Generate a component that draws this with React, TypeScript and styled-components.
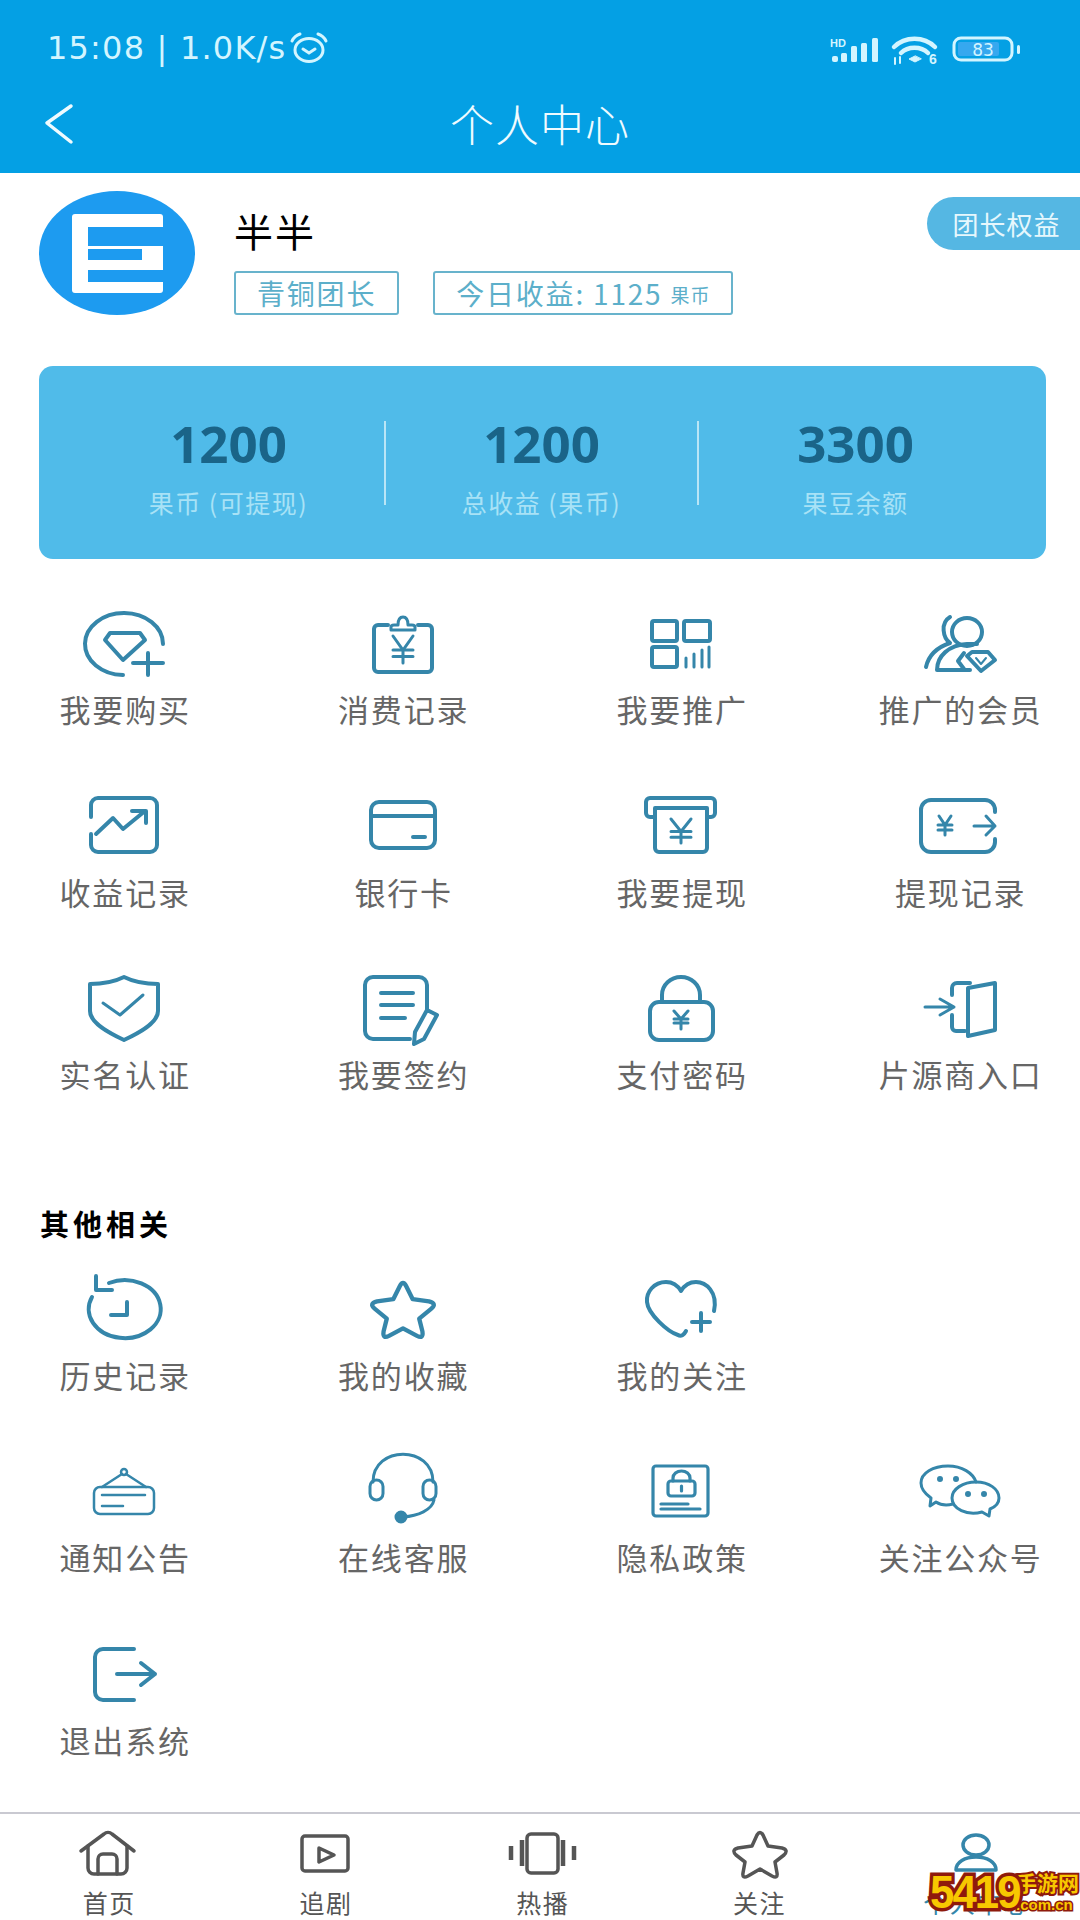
import React from 'react'
import styled, { createGlobalStyle } from 'styled-components'

const CJK = `"Noto Sans CJK SC", "Noto Sans", sans-serif`

const GlobalStyle = createGlobalStyle`
  html, body {
    margin: 0;
    padding: 0;
    background: #fff;
  }
  body {
    font-family: ${CJK};
  }
`

const Page = styled.div`
  position: relative;
  width: 1080px;
  height: 1920px;
  overflow: hidden;
  display: flex;
  flex-direction: column;
  background: #fff;
`

const Header = styled.header`
  height: 173px;
  flex: none;
  background: #04a0e4;
  color: #d3f5ff;
`

const StatusBar = styled.div`
  height: 96px;
  padding: 33px 58px 0 47px;
  box-sizing: border-box;
  display: flex;
  align-items: flex-start;
  justify-content: space-between;
`

const StatusLeft = styled.div`
  display: flex;
  align-items: center;
  gap: 3px;
  height: 30px;
`

const StatusText = styled.span`
  font-family: "DejaVu Sans", sans-serif;
  font-size: 32px;
  line-height: 30px;
  letter-spacing: 1.2px;
  white-space: nowrap;
`

const StatusRight = styled.div`
  display: flex;
  align-items: center;
  gap: 11px;
  height: 30px;
  margin-top: 3px;
`

const StatusIcon = styled.svg`
  overflow: visible;
  flex: none;
`

const NavBar = styled.nav`
  display: grid;
  grid-template-columns: 1fr auto 1fr;
  align-items: center;
  height: 56px;
  padding: 0 44px;
`

const Title = styled.h1`
  margin: -3px 0 0;
  font-size: 44px;
  line-height: 56px;
  font-weight: 300;
  letter-spacing: 1px;
  color: #effbff;
`

const Profile = styled.section`
  display: flex;
  align-items: flex-start;
  padding: 18px 0 0 39px;
  height: 177px;
  box-sizing: border-box;
`

const Avatar = styled.svg`
  width: 156px;
  height: 124px;
  flex: none;
`

const ProfileInfo = styled.div`
  margin-left: 39px;
  display: flex;
  flex-direction: column;
`

const Name = styled.div`
  font-size: 39px;
  line-height: 40px;
  margin-top: 19px;
  letter-spacing: 2px;
  color: #000;
`

const Tags = styled.div`
  display: flex;
  align-items: flex-start;
  gap: 34px;
  margin-top: 21px;
`

const Tag = styled.div`
  box-sizing: border-box;
  height: 44px;
  padding: 0 21px;
  border: 2px solid #68b3cc;
  border-radius: 3px;
  display: flex;
  align-items: center;
  color: #5cafca;
  font-size: 28px;
  letter-spacing: 1.8px;
  white-space: nowrap;
`

const TagUnit = styled.span`
  font-size: 19px;
  letter-spacing: 1px;
  margin-left: 8px;
  margin-top: 3px;
`

const PerkButton = styled.button`
  margin: 6px 0 0 auto;
  width: 153px;
  height: 53px;
  border: 0;
  padding: 0 0 0 6px;
  border-radius: 27px 0 0 27px;
  background: #55b7e3;
  color: #e6f7fd;
  font-family: ${CJK};
  font-size: 26px;
  letter-spacing: 1px;
`

const StatCard = styled.section`
  margin: 16px 34px 0 39px;
  height: 193px;
  box-sizing: border-box;
  flex: none;
  border-radius: 14px;
  background: #50bbe9;
  display: grid;
  grid-template-columns: repeat(3, 1fr);
  padding: 55px 34px 0;
`

const Stat = styled.div<{ $divided?: boolean }>`
  height: 84px;
  display: flex;
  flex-direction: column;
  align-items: center;
  border-right: ${({ $divided }) => ($divided ? '2px solid #b9e5f6' : '0')};
`

const StatValue = styled.div`
  font-family: "Open Sans", sans-serif;
  font-weight: 700;
  font-size: 51px;
  line-height: 50px;
  margin-top: -3px;
  color: #1a6488;
`

const StatLabel = styled.div`
  font-size: 25px;
  line-height: 30px;
  margin-top: 19px;
  letter-spacing: 1.5px;
  color: #a8e2f6;
  white-space: nowrap;
`

const Grid = styled.div<{ $top: number }>`
  display: grid;
  grid-template-columns: repeat(4, 278.5px);
  grid-auto-rows: 182.5px;
  margin: ${({ $top }) => $top}px 0 0 -15px;
`

const Cell = styled.div`
  display: flex;
  flex-direction: column;
  align-items: center;
`

const CellIcon = styled.svg`
  width: 90px;
  height: 90px;
  flex: none;
  fill: none;
  stroke: #3586aa;
  stroke-width: 4;
  stroke-linecap: round;
  stroke-linejoin: round;
`

const CellLabel = styled.div`
  margin-top: 5px;
  font-size: 31px;
  line-height: 36px;
  letter-spacing: 1.8px;
  margin-right: -1.8px;
  color: #666;
  white-space: nowrap;
`

const SectionTitle = styled.h2`
  margin: 61px 0 0 40px;
  font-size: 29px;
  line-height: 36px;
  font-weight: 700;
  letter-spacing: 4px;
  color: #000;
`

const TabBar = styled.footer`
  margin-top: auto;
  height: 108px;
  box-sizing: border-box;
  flex: none;
  border-top: 2px solid #c9c9d1;
  display: grid;
  grid-template-columns: repeat(5, 216.8px);
  padding-top: 9px;
`

const Tab = styled.div<{ $active?: boolean }>`
  display: flex;
  flex-direction: column;
  align-items: center;
  color: ${({ $active }) => ($active ? '#3586aa' : '#555')};
`

const TabIcon = styled.svg`
  width: 70px;
  height: 60px;
  fill: none;
  stroke: currentColor;
  stroke-width: 3.5;
  stroke-linecap: round;
  stroke-linejoin: round;
`

const TabLabel = styled.div`
  margin-top: 4px;
  font-size: 25px;
  line-height: 30px;
  letter-spacing: 1.5px;
  margin-right: -1.5px;
  white-space: nowrap;
`

const Watermark = styled.div`
  position: absolute;
  right: 0;
  bottom: 2px;
  width: 150px;
  height: 52px;
  display: flex;
  align-items: center;
  color: #f8c800;
  font-family: "Liberation Sans", sans-serif;
  font-weight: 700;
`

const WatermarkBig = styled.div`
  width: 86px;
  flex: none;
  font-size: 46px;
  line-height: 52px;
  letter-spacing: -2px;
  transform: scaleX(0.95);
  transform-origin: left center;
  paint-order: stroke fill;
  -webkit-text-stroke: 7px #8f1a0c;
`

const WatermarkSide = styled.div`
  display: flex;
  flex-direction: column;
  align-items: flex-start;
`

const WatermarkCn = styled.div`
  font-family: ${CJK};
  font-size: 21px;
  line-height: 26px;
  font-weight: 700;
  paint-order: stroke fill;
  -webkit-text-stroke: 4px #8f1a0c;
`

const WatermarkDomain = styled.div`
  font-size: 15px;
  line-height: 20px;
  white-space: nowrap;
  paint-order: stroke fill;
  -webkit-text-stroke: 3px #8f1a0c;
`

const yen = (y: number, h = 27) => {
  const mid = y + h * 0.52
  return (
    <g strokeWidth="3">
      <path d={`M35 ${y} L45 ${mid} L55 ${y}`} />
      <path d={`M35 ${mid} H55 M35 ${mid + h * 0.24} H55 M45 ${mid} V${y + h}`} />
    </g>
  )
}

const ICONS: Record<string, React.ReactNode> = {
  buy: (
    <>
      <path d="M84 46 A39 31 0 1 0 44 77" />
      <path d="M26 42 L31 35 H61 L66 42 L44 62 Z" />
      <path d="M54 65 H84 M69 55 V77" />
    </>
  ),
  spend: (
    <>
      <path d="M30 27 H20 a4 4 0 0 0 -4 4 V70 a4 4 0 0 0 4 4 H70 a4 4 0 0 0 4 -4 V31 a4 4 0 0 0 -4 -4 H60" />
      <path d="M33 32 V29 Q33 27 36 27 H40 Q40 19 45 19 Q50 19 50 27 H54 Q57 27 57 29 V32 Z" strokeWidth="3" />
      {yen(38)}
    </>
  ),
  promote: (
    <>
      <rect x="16" y="23" width="25" height="20" rx="2" />
      <rect x="48" y="23" width="26" height="20" rx="2" />
      <rect x="16" y="49" width="25" height="20" rx="2" />
      <path d="M50 60 V69 M58 56 V69 M66 52 V69 M73 49 V69" strokeWidth="3" />
    </>
  ),
  members: (
    <>
      <ellipse cx="52" cy="34" rx="15" ry="14" />
      <path d="M35 19 C25 25 28 40 35 45 C20 50 13 60 11 69" />
      <path d="M22 72 C22 58 34 47 52 46 H62 M22 72 H55" />
      <path d="M49 55 L43 63 L49 71" />
      <path d="M52 58 L57 54 H73 L80 62 L66 73 Z" />
      <path d="M61 60 L66 66 L71 60" strokeWidth="2" />
    </>
  ),
  income: (
    <>
      <path d="M12 36 V24 a7 7 0 0 1 7 -7 H71 a7 7 0 0 1 7 7 V64 a7 7 0 0 1 -7 7 H19 a7 7 0 0 1 -7 -7 V53" />
      <path d="M17 53 L34 37 L44 48 L66 30 M53 30 H67 V42" />
    </>
  ),
  card: (
    <>
      <rect x="13" y="21" width="64" height="46" rx="8" />
      <path d="M13 35 H77 M55 56 H67" />
    </>
  ),
  withdraw: (
    <>
      <path d="M19 36 H14 a4 4 0 0 1 -4 -4 V21 a4 4 0 0 1 4 -4 H75 a4 4 0 0 1 4 4 V32 a4 4 0 0 1 -4 4 H71" />
      <path d="M19 27 H71 M19 27 V67 a4 4 0 0 0 4 4 H67 a4 4 0 0 0 4 -4 V27" />
      {yen(38, 24)}
    </>
  ),
  withdrawLog: (
    <>
      <path d="M80 31 V29 a10 10 0 0 0 -10 -10 H16 a10 10 0 0 0 -10 10 V61 a10 10 0 0 0 10 10 H70 a10 10 0 0 0 10 -10 V58" />
      <path d="M24 35 L30 44 L36 35 M23 44 H37 M23 49 H37 M30 44 V54" strokeWidth="3" />
      <path d="M59 45 H80 M71 35 L80 45 L71 54" strokeWidth="3" />
    </>
  ),
  shield: (
    <>
      <path d="M45 14 C55 19 68 21 79 21 V48 C79 60 60 70 45 77 C30 70 11 60 11 48 V21 C22 21 35 19 45 14 Z" />
      <path d="M24 40 L41 52 L64 32" strokeWidth="3" />
    </>
  ),
  sign: (
    <>
      <path d="M69 46 V22 a8 8 0 0 0 -8 -8 H15 a8 8 0 0 0 -8 8 V68 a8 8 0 0 0 8 8 H52" />
      <path d="M23 30 H55 M23 42 H55 M23 55 H47" />
      <path d="M69 47 L79 52 L66 76 L56 81 L57 69 Z" />
    </>
  ),
  lock: (
    <>
      <rect x="14" y="39" width="63" height="38" rx="9" />
      <path d="M26 39 V32 a19 18 0 0 1 38 0 V39" />
      <path d="M38 48 L45 56 L52 48 M38 56 H52 M38 60 H52 M45 56 V66" strokeWidth="3" />
    </>
  ),
  door: (
    <>
      <path d="M53 25 L80 20 V67 L53 73 Z" />
      <path d="M55 20 H42 a5 5 0 0 0 -5 5 V32 M37 52 V64 a4 4 0 0 0 4 4 H50" />
      <path d="M10 44 H39 M25 36 L39 44 L25 52" strokeWidth="3" />
    </>
  ),
  history: (
    <>
      <path d="M30 19 A36 29 0 1 1 13 33" />
      <path d="M17 12 V26 H33" />
      <path d="M48 38 V51 H32" />
    </>
  ),
  star: (
    <path
      transform="translate(45 46) scale(1.08) translate(-45 -45)"
      d="M42 23 Q45 17 48 23 L54 35 L69 37 Q77 39 71 44 L60 53 L63 65 Q64 72 58 69 L45 62 L32 69 Q26 72 27 65 L30 53 L19 44 Q13 39 21 37 L36 35 Z"
    />
  ),
  heart: (
    <>
      <path d="M78 47 C82 28 70 18 60 18 C53 18 48 22 45 27 C42 22 37 18 30 18 C18 18 10 28 11 38 C12 50 32 68 42 71 C45 73 48 71 50 67" />
      <path d="M56 58 H74 M65 49 V67" />
    </>
  ),
  notice: (
    <g strokeWidth="2.5">
      <rect x="15" y="41" width="60" height="27" rx="6" />
      <path d="M23 41 L43 28 M67 41 L47 28" />
      <circle cx="45" cy="26" r="3" />
      <path d="M23 49 H66 M23 60 H44" />
    </g>
  ),
  service: (
    <g strokeWidth="3">
      <path d="M15 36 C15 -1 75 -1 75 36" />
      <rect x="12" y="34" width="13" height="20" rx="6.5" />
      <rect x="65" y="34" width="13" height="20" rx="6.5" />
      <path d="M76 54 C74 64 60 70 45 71" />
      <circle cx="43" cy="71" r="5" fill="#3586aa" />
    </g>
  ),
  privacy: (
    <g strokeWidth="3.2">
      <rect x="17" y="20" width="55" height="50" rx="3" />
      <rect x="32" y="35" width="27" height="15" rx="3" />
      <path d="M37 35 V32 a8.5 7 0 0 1 17 0 V35 M45.5 40 V45" />
      <path d="M25 58 H52 M25 63 H64" />
    </g>
  ),
  wechat: (
    <g strokeWidth="3">
      <path d="M38 58 C30 60 24 58 21 56 L15 60 L16 52 C9 47 6 41 6 37 C6 27 18 20 33 20 C47 20 58 27 61 36" />
      <path d="M61 36 C74 36 84 43 84 52 C84 57 80 61 75 63 L74 70 L67 66 C52 70 37 63 37 52 C37 43 48 36 61 36 Z" />
      <circle cx="25" cy="33" r="1.5" />
      <circle cx="41" cy="33" r="1.5" />
      <circle cx="53" cy="48" r="1.5" />
      <circle cx="69" cy="48" r="1.5" />
    </g>
  ),
  exit: (
    <>
      <path d="M55 20 H24 a8 8 0 0 0 -8 8 V63 a8 8 0 0 0 8 8 H55" />
      <path d="M38 45 H76 M62 34 L76 45 L62 56" />
    </>
  ),
}

const TAB_ICONS: Record<string, React.ReactNode> = {
  home: (
    <>
      <path d="M8 28 L31 11 a6 6 0 0 1 8 0 L61 28" />
      <path d="M15 23 V45 a6 6 0 0 0 6 6 H48 a6 6 0 0 0 6 -6 V23" />
      <path d="M25 51 V36 a5 5 0 0 1 5 -5 H39 a5 5 0 0 1 5 5 V51" />
    </>
  ),
  play: (
    <>
      <rect x="12" y="13" width="46" height="35" rx="3" />
      <path d="M29 25 L44 32 L29 39 Z" />
    </>
  ),
  hot: (
    <>
      <rect x="20" y="11" width="31" height="39" rx="4" />
      <path d="M4 23 V37 M15 17 V43 M56 17 V43 M67 23 V37" strokeWidth="4.5" strokeLinecap="butt" />
    </>
  ),
  star: (
    <path d="M33 12 Q36 7 39 12 L44 23 L58 25 Q65 27 60 32 L51 39 L53 50 Q54 56 48 53 L36 46 L24 53 Q18 56 19 50 L21 39 L12 32 Q7 27 14 25 L28 23 Z" />
  ),
  user: (
    <>
      <ellipse cx="35" cy="22" rx="13" ry="10" />
      <path d="M15 47 C15 39 24 34 35 34 C46 34 55 39 55 47" />
      <path d="M16 47 H54" />
    </>
  ),
}

const MENU: (null | [string, string])[] = [
  ['buy', '我要购买'],
  ['spend', '消费记录'],
  ['promote', '我要推广'],
  ['members', '推广的会员'],
  ['income', '收益记录'],
  ['card', '银行卡'],
  ['withdraw', '我要提现'],
  ['withdrawLog', '提现记录'],
  ['shield', '实名认证'],
  ['sign', '我要签约'],
  ['lock', '支付密码'],
  ['door', '片源商入口'],
]

const OTHER: (null | [string, string])[] = [
  ['history', '历史记录'],
  ['star', '我的收藏'],
  ['heart', '我的关注'],
  null,
  ['notice', '通知公告'],
  ['service', '在线客服'],
  ['privacy', '隐私政策'],
  ['wechat', '关注公众号'],
  ['exit', '退出系统'],
]

const TABS: [string, string][] = [
  ['home', '首页'],
  ['play', '追剧'],
  ['hot', '热播'],
  ['star', '关注'],
  ['user', '个人中心'],
]

// dy nudges the drawing down inside its box, the labels stay on the row rhythm
const renderGrid = (items: (null | [string, string])[], dy: number) =>
  items.map((item, i) =>
    item ? (
      <Cell key={item[1]}>
        <CellIcon viewBox={`0 ${-dy} 90 90`}>{ICONS[item[0]]}</CellIcon>
        <CellLabel>{item[1]}</CellLabel>
      </Cell>
    ) : (
      <span key={i} />
    ),
  )

const App: React.FC = () => (
  <Page>
    <GlobalStyle />
    <Header>
      <StatusBar>
        <StatusLeft>
          <StatusText>15:08 | 1.0K/s</StatusText>
          <StatusIcon width="40" height="32" viewBox="0 0 40 32" fill="none" stroke="#d3f5ff" strokeWidth="3" strokeLinecap="round">
            <ellipse cx="20" cy="18" rx="14" ry="11.5" />
            <path d="M14 17 L20 21 L26 17" />
            <path d="M3 9 C5 5 8 3 11 2 M37 9 C35 5 32 3 29 2" />
          </StatusIcon>
        </StatusLeft>
        <StatusRight>
          <StatusIcon width="50" height="30" viewBox="0 0 50 30" fill="#d3f5ff">
            <text x="0" y="11" fontFamily="Liberation Sans, sans-serif" fontWeight="700" fontSize="11">HD</text>
            <rect x="2" y="20" width="6" height="6" rx="2" />
            <rect x="11" y="17" width="6" height="9" rx="1.5" />
            <rect x="21" y="10" width="6" height="16" rx="1.5" />
            <rect x="31" y="7" width="6" height="19" rx="1.5" />
            <rect x="42" y="2" width="6" height="24" rx="1.5" />
          </StatusIcon>
          <StatusIcon width="50" height="30" viewBox="0 0 50 30" fill="none" stroke="#d3f5ff" strokeWidth="4.5" strokeLinecap="round">
            <path d="M3 11 C14 0 33 0 44 11" />
            <path d="M10 17 C17 10 30 10 37 17" />
            <path d="M24 20 L18 23 L24 26 L30 23 Z" fill="#d3f5ff" strokeWidth="1" />
            <path d="M4 22 V28 M9 21 V27" strokeWidth="2" />
            <text x="38" y="28" fill="#d3f5ff" stroke="none" fontFamily="Liberation Sans, sans-serif" fontWeight="700" fontSize="14">6</text>
          </StatusIcon>
          <StatusIcon width="70" height="30" viewBox="0 0 70 30" fill="none">
            <rect x="2" y="2" width="58" height="22" rx="7" stroke="#d3f5ff" strokeWidth="3" />
            <rect x="6" y="6" width="41" height="14" rx="2" fill="#36a8ef" />
            <text x="31" y="20" textAnchor="middle" fill="#d3f5ff" fontFamily="DejaVu Sans, sans-serif" fontSize="17">83</text>
            <rect x="65" y="9" width="3" height="9" rx="1.5" fill="#d3f5ff" />
          </StatusIcon>
        </StatusRight>
      </StatusBar>
      <NavBar>
        <svg width="30" height="42" viewBox="0 0 30 42" fill="none" stroke="#effbff" strokeWidth="3.5" strokeLinecap="round" strokeLinejoin="round">
          <path d="M27 3 L3 20 L27 39" />
        </svg>
        <Title>个人中心</Title>
        <span />
      </NavBar>
    </Header>

    <Profile>
      <Avatar viewBox="0 0 156 124">
        <ellipse cx="78" cy="62" rx="78" ry="62" fill="#1d9bf0" />
        <rect x="33" y="23" width="91" height="79" rx="3" fill="#fff" />
        <path d="M49 36 H124 V55 H49 Z M49 58 H103 V69 H49 Z M49 79 H124 V91 H49 Z" fill="#1d9bf0" />
      </Avatar>
      <ProfileInfo>
        <Name>半半</Name>
        <Tags>
          <Tag>青铜团长</Tag>
          <Tag>
            今日收益: 1125<TagUnit>果币</TagUnit>
          </Tag>
        </Tags>
      </ProfileInfo>
      <PerkButton>团长权益</PerkButton>
    </Profile>

    <StatCard>
      <Stat $divided>
        <StatValue>1200</StatValue>
        <StatLabel>果币 (可提现)</StatLabel>
      </Stat>
      <Stat $divided>
        <StatValue>1200</StatValue>
        <StatLabel>总收益 (果币)</StatLabel>
      </Stat>
      <Stat>
        <StatValue>3300</StatValue>
        <StatLabel>果豆余额</StatLabel>
      </Stat>
    </StatCard>

    <Grid $top={37}>{renderGrid(MENU, 2)}</Grid>
    <SectionTitle>其他相关</SectionTitle>
    <Grid $top={21}>{renderGrid(OTHER, 2)}</Grid>

    <TabBar>
      {TABS.map(([icon, label]) => (
        <Tab key={icon} $active={icon === 'user'}>
          <TabIcon viewBox="0 0 70 60">{TAB_ICONS[icon]}</TabIcon>
          <TabLabel>{label}</TabLabel>
        </Tab>
      ))}
    </TabBar>

    <Watermark>
      <WatermarkBig>5419</WatermarkBig>
      <WatermarkSide>
        <WatermarkCn>手游网</WatermarkCn>
        <WatermarkDomain>.com.cn</WatermarkDomain>
      </WatermarkSide>
    </Watermark>
  </Page>
)

export default App
